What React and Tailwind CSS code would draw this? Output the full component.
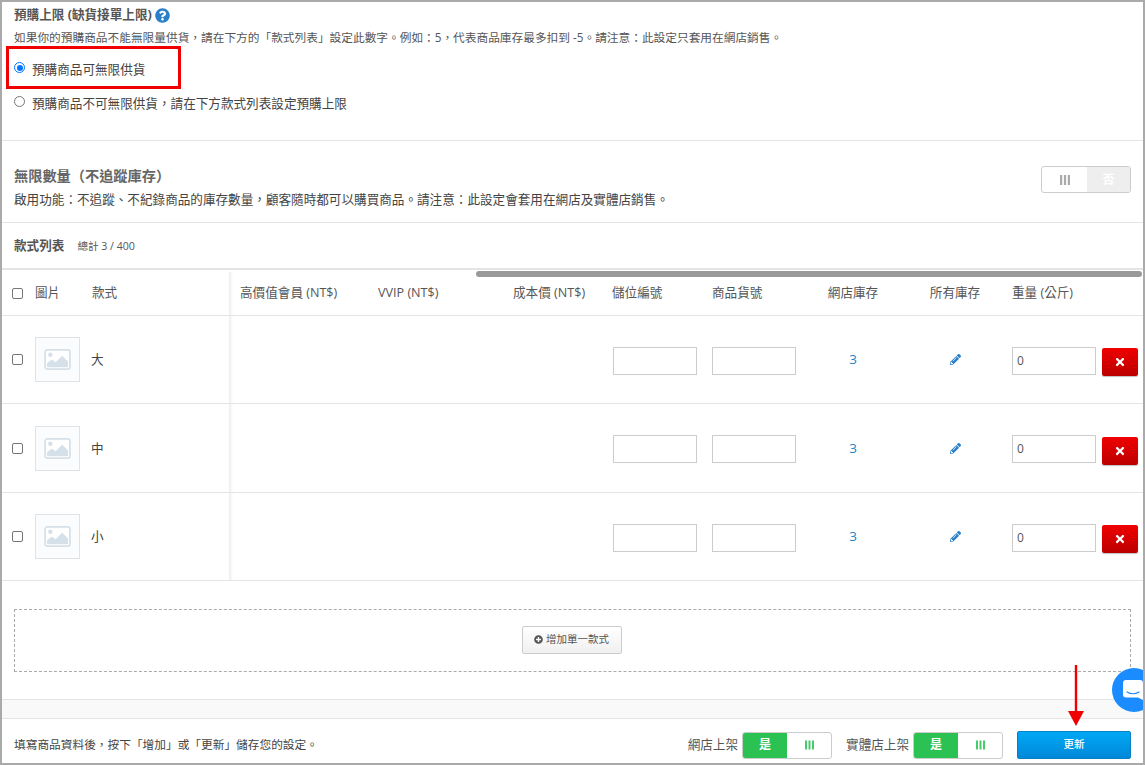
import React from "react";
import { FaPencilAlt, FaTimes, FaPlusCircle, FaQuestionCircle } from "react-icons/fa";

const Bars = ({ className }) => (
  <svg viewBox="0 0 10 10" className={className} fill="currentColor" aria-hidden="true">
    <rect x="0" y="0" width="2.2" height="10" />
    <rect x="3.9" y="0" width="2.2" height="10" />
    <rect x="7.8" y="0" width="2.2" height="10" />
  </svg>
);

const ImageIcon = () => (
  <svg viewBox="0 0 28 22" className="w-[27px] h-[21px]" aria-hidden="true">
    <rect x="1" y="1" width="26" height="20" rx="2" fill="#fff" stroke="#d6e0e8" strokeWidth="1.8" />
    <circle cx="6.5" cy="6" r="2.3" fill="#d6e0e8" />
    <path d="M3 19 L3 15 L8 11 L12 14 L19 7 L25 13 L25 19 Z" fill="#d6e0e8" />
  </svg>
);

const Check = () => (
  <span className="block w-[11px] h-[11px] rounded-[2px] border border-[#767676] bg-white" />
);

const Divider = () => (
  <div className="w-[4px] h-full shrink-0 bg-gradient-to-r from-[#ececec] to-white" />
);

const Row = ({ label, h }) => (
  <div className={`flex items-center border-b border-[#e4e4e4] ${h}`}>
    <div className="flex items-center w-[227px] h-full shrink-0">
      <div className="w-[33px] pl-[10px] shrink-0"><Check /></div>
      <div className="w-[57px] shrink-0">
        <div className="w-[45px] h-[45px] border border-[#dfe3e8] bg-[#fbfcfd] flex items-center justify-center"><ImageIcon /></div>
      </div>
      <div className="text-[12.6px] text-[#444] mt-[2px] -ml-[1px]">{label}</div>
    </div>
    <Divider />
    <div className="w-[371px] shrink-0" />
    <div className="w-[99px] shrink-0 pl-[9px] mt-[2px]"><div className="w-[84px] h-[28px] border border-[#ccc] bg-white" /></div>
    <div className="w-[99px] shrink-0 pl-[9px] mt-[2px]"><div className="w-[84px] h-[28px] border border-[#ccc] bg-white" /></div>
    <div className="w-[102px] shrink-0 text-center text-[13.5px] text-[#2a7fc9]">3</div>
    <div className="w-[102px] shrink-0 flex justify-center"><FaPencilAlt className="text-[#2a7fc9] w-[11px] h-[11px]" /></div>
    <div className="w-[96px] shrink-0 pl-[6px] mt-[2px]">
      <div className="w-[84px] h-[28px] border border-[#ccc] bg-white pl-[4px] flex items-center text-[12px] text-[#555]">0</div>
    </div>
    <div className="w-[36px] h-[28px] mt-[5px] shrink-0 rounded-[2px] bg-gradient-to-b from-[#f00000] to-[#bb0000] shadow-[0_1px_1px_rgba(0,0,0,0.25)] flex items-center justify-center">
      <FaTimes className="text-white w-[12px] h-[12px]" />
    </div>
  </div>
);

const Toggle = ({ labelYes }) => (
  <div className="flex w-[90px] h-[27px] rounded-[3px] border border-[#ccc] overflow-hidden bg-white">
    <div className="w-[44px] bg-[#2bc253] text-white text-[12px] font-bold flex items-center justify-center">{labelYes}</div>
    <div className="flex-1 flex items-center justify-center"><Bars className="w-[9px] h-[10px] text-[#47cb6b]" /></div>
  </div>
);

export default function App() {
  return (
    <div
      className="relative w-[1145px] h-[765px] overflow-hidden bg-white border-2 border-[#aaa] text-[#555] font-['Open_Sans','Noto_Sans_CJK_TC',sans-serif]"
    >
      {/* preorder */}
      <section className="h-[139px] border-b border-[#e4e4e4] pl-[12px] pt-[5px]">
        <div className="flex items-center h-[16px] gap-[3px] text-[12.6px] font-bold text-[#555]">
          <span>預購上限 (缺貨接單上限)</span>
          <FaQuestionCircle className="w-[15px] h-[15px] text-[#2a7fc9]" />
        </div>
        <p className="mt-[6px] h-[16px] leading-[16px] text-[11.7px] text-[#555] whitespace-nowrap">如果你的預購商品不能無限量供貨，請在下方的「款式列表」設定此數字。例如：5，代表商品庫存最多扣到 -5。請注意：此設定只套用在網店銷售。</p>
        <div className="mt-[15px] flex items-center gap-[7px] h-[20px]">
          <span className="w-[11px] h-[11px] mb-[5px] rounded-full border-[1.5px] border-[#0075ff] flex items-center justify-center"><span className="w-[6px] h-[6px] rounded-full bg-[#0075ff]" /></span>
          <span className="text-[12.6px] text-[#444]">預購商品可無限供貨</span>
        </div>
        <div className="mt-[14px] flex items-center gap-[7px] h-[20px]">
          <span className="w-[11px] h-[11px] mb-[5px] rounded-full border border-[#767676]" />
          <span className="text-[12.6px] text-[#444]">預購商品不可無限供貨，請在下方款式列表設定預購上限</span>
        </div>
      </section>

      {/* unlimited */}
      <section className="h-[82px] border-b border-[#e4e4e4] pl-[12px] pr-[12px] flex justify-between">
        <div className="pt-[25px]">
          <div className="text-[14.2px] leading-[20px] font-bold text-[#666]">無限數量（不追蹤庫存）</div>
          <p className="mt-[6px] text-[12.6px] leading-[16px] text-[#444]">啟用功能：不追蹤、不紀錄商品的庫存數量，顧客隨時都可以購買商品。請注意：此設定會套用在網店及實體店銷售。</p>
        </div>
        <div className="mt-[25px] flex w-[90px] h-[27px] rounded-[3px] border border-[#ccc] overflow-hidden bg-white">
          <div className="w-[45px] flex items-center justify-center"><Bars className="w-[10px] h-[10px] text-[#aaa]" /></div>
          <div className="flex-1 bg-[#eee] flex items-center justify-center text-white text-[12px] font-bold">否</div>
        </div>
      </section>

      {/* list header */}
      <div className="h-[47px] pl-[12px] flex items-center gap-[13px] pt-[2px] border-b-2 border-[#e4e4e4]">
        <span className="text-[12.6px] font-bold text-[#555]">款式列表</span>
        <span className="text-[10.6px] text-[#555]">總計 3 / 400</span>
      </div>

      {/* table */}
      <div className="relative">
        <div className="absolute left-[474px] top-[1px] w-[666px] h-[6px] rounded-full bg-[#999]" />
        <div className="flex items-center h-[46px] pt-[2px] border-b border-[#e4e4e4] text-[12.6px] text-[#555]">
          <div className="flex items-center w-[227px] h-full shrink-0">
            <div className="w-[33px] pl-[10px] shrink-0"><Check /></div>
            <div className="w-[57px] shrink-0">圖片</div>
            <div>款式</div>
          </div>
          <Divider />
          <div className="w-[136px] shrink-0 pl-[7px]">高價值會員 (NT$)</div>
          <div className="w-[134px] shrink-0 pl-[9px]">VVIP (NT$)</div>
          <div className="w-[100px] shrink-0 pl-[10px]">成本價 (NT$)</div>
          <div className="w-[99px] shrink-0 pl-[9px]">儲位編號</div>
          <div className="w-[100px] shrink-0 pl-[10px]">商品貨號</div>
          <div className="w-[102px] shrink-0 text-center">網店庫存</div>
          <div className="w-[102px] shrink-0 text-center">所有庫存</div>
          <div className="shrink-0 pl-[6px]">重量 (公斤)</div>
        </div>
        <Row label="大" h="h-[88px]" />
        <Row label="中" h="h-[89px]" />
        <Row label="小" h="h-[88px]" />
      </div>

      {/* add area */}
      <div className="h-[119px] pt-[28px] px-[12px] border-b border-[#e4e4e4]">
        <div className="h-[63px] border border-dashed border-[#aaa] flex items-center justify-center">
          <button className="w-[100px] h-[28px] mr-[2px] mb-[2px] rounded-[2px] border border-[#ccc] bg-gradient-to-b from-white to-[#f0f0f0] flex items-center justify-center gap-[3px] text-[10.5px] text-[#555]">
            <FaPlusCircle className="w-[9px] h-[9px] text-[#555]" />
            <span>增加單一款式</span>
          </button>
        </div>
      </div>

      <div className="h-[19px] bg-[#f9f9f9] border-b border-[#e4e4e4]" />

      {/* footer */}
      <div className="h-[44px] pl-[12px] pr-[12px] flex items-center justify-between">
        <span className="text-[11.7px] text-[#444] pt-[8px]">填寫商品資料後，按下「增加」或「更新」儲存您的設定。</span>
        <div className="flex items-center pt-[8px]">
          <span className="text-[12.6px] text-[#555] mr-[4px]">網店上架</span>
          <Toggle labelYes="是" />
          <span className="text-[12.6px] text-[#555] ml-[14px] mr-[4px]">實體店上架</span>
          <Toggle labelYes="是" />
          <button className="ml-[14px] w-[114px] h-[28px] rounded-[2px] border border-[#0a7fc4] bg-gradient-to-b from-[#00a8f5] to-[#0088d8] text-white text-[10.5px] font-medium">更新</button>
        </div>
      </div>

      {/* annotations over content */}
      <div className="absolute left-[4px] top-[44px] w-[175px] h-[43px] border-[3px] border-[#f00000]" />
      <svg className="absolute left-[1065px] top-[663px] w-[18px] h-[62px]" viewBox="0 0 18 62" aria-hidden="true">
        <rect x="7.8" y="0" width="2.4" height="47" fill="#f00000" />
        <path d="M1 46 L17 46 L9 61 Z" fill="#f00000" />
      </svg>
      <div className="absolute left-[1110px] top-[666px] w-[44px] h-[44px] rounded-full bg-[#1a8cff] flex items-center justify-start pl-[11px]">
        <svg viewBox="0 0 20 20" className="w-[20px] h-[20px]" aria-hidden="true">
          <path d="M3 0 H17 A3 3 0 0 1 20 3 V20 L15 17.5 H3 A3 3 0 0 1 0 14.5 V3 A3 3 0 0 1 3 0 Z" fill="#fff" />
          <path d="M4 12 Q10 15.5 16 12" fill="none" stroke="#1a8cff" strokeWidth="1.2" strokeLinecap="round" />
        </svg>
      </div>
    </div>
  );
}
